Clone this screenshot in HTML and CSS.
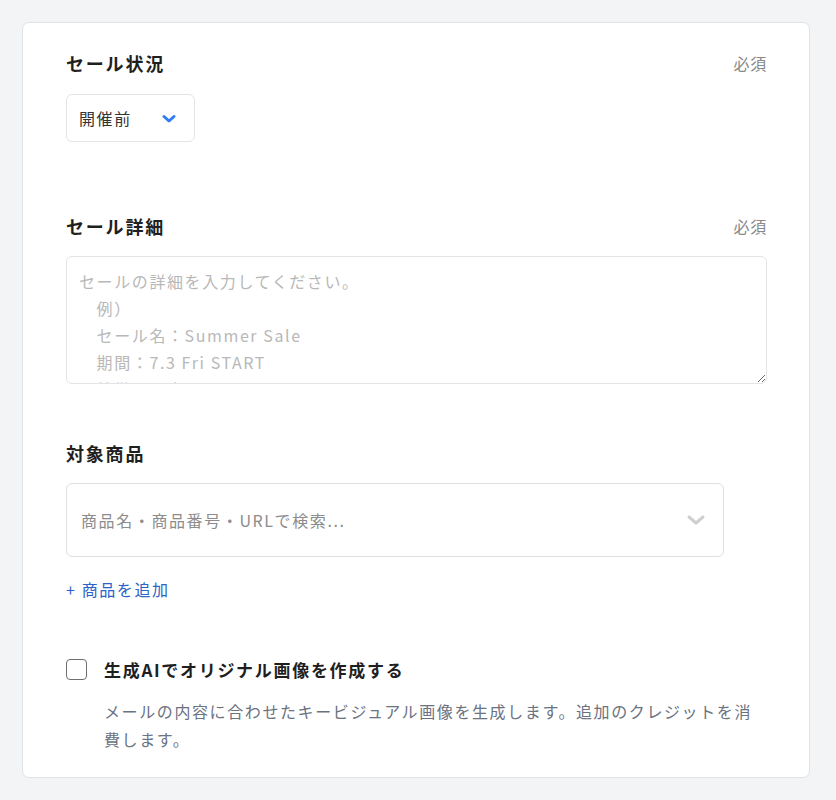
FILE: index.html
```html
<!DOCTYPE html>
<html lang="ja">
<head>
<meta charset="utf-8">
<link rel="stylesheet" href="styles.css">
</head>
<body>
<div class="page">
  <div class="card">
    <section class="field field-status">
      <div class="field-head">
        <span class="label">セール状況</span>
        <span class="required">必須</span>
      </div>
      <div class="select">
        <span class="select-value">開催前</span>
        <svg class="chev-blue" width="14" height="10" viewBox="0 0 14 10"><path d="M2 2.5 L7 7 L12 2.5" fill="none" stroke="#2f7cf6" stroke-width="3" stroke-linecap="round" stroke-linejoin="round"/></svg>
      </div>
    </section>

    <section class="field field-detail">
      <div class="field-head">
        <span class="label">セール詳細</span>
        <span class="required">必須</span>
      </div>
      <textarea class="textarea" placeholder="セールの詳細を入力してください。&#10;　例）&#10;　セール名：Summer Sale&#10;　期間：7.3 Fri START&#10;　特徴：最大50%OFF"></textarea>
    </section>

    <section class="field field-products">
      <div class="field-head">
        <span class="label">対象商品</span>
      </div>
      <div class="search">
        <span class="search-ph">商品名・商品番号・URLで検索...</span>
        <svg class="chev-gray" width="20" height="12" viewBox="0 0 20 12"><path d="M3 3 L10 9 L17 3" fill="none" stroke="#cfcfcf" stroke-width="3" stroke-linecap="round" stroke-linejoin="round"/></svg>
      </div>
      <a class="add-link">+ 商品を追加</a>
    </section>

    <section class="field field-ai">
      <label class="check-row">
        <span class="checkbox"></span>
        <span class="check-label">生成AIでオリジナル画像を作成する</span>
      </label>
      <p class="desc">メールの内容に合わせたキービジュアル画像を生成します。追加のクレジットを消費します。</p>
    </section>
  </div>
</div>
</body>
</html>
```

FILE: styles.css
```css
* { box-sizing: border-box; }
html, body { margin: 0; padding: 0; }
body {
  background: #f3f4f6;
  font-family: "Noto Sans CJK JP", "Noto Sans", sans-serif;
  color: #1f2328;
}
.page {
  padding: 22px 26px 21px 22px;
}
.card {
  background: #ffffff;
  border: 1px solid #dfe2e6;
  border-radius: 7px;
  padding: 27px 42px 24px 43px;
}
.field-head {
  display: flex;
  justify-content: space-between;
  align-items: center;
  height: 26px;
}
.label {
  font-size: 18px;
  font-weight: 700;
  letter-spacing: 0.1em;
  color: #1f1f1f;
  line-height: 26px;
}
.required {
  font-size: 16px;
  color: #8a8a8a;
  letter-spacing: 0.05em;
  line-height: 26px;
}
.select {
  margin-top: 18px;
  width: 129px;
  height: 48px;
  border: 1px solid #e2e4e8;
  border-radius: 6px;
  display: flex;
  align-items: center;
  justify-content: space-between;
  padding: 0 18px 0 12px;
}
.select-value {
  font-size: 16px;
  letter-spacing: 0.1em;
  color: #333;
}
.chev-blue { display: block; margin-top: 1px; }

.field-detail { margin-top: 71px; }
.textarea {
  display: block;
  margin-top: 17px;
  width: 100%;
  height: 128px;
  border: 1px solid #e2e4e8;
  border-radius: 6px;
  padding: 11px 12px;
  font-family: "Noto Sans CJK JP", "Noto Sans", sans-serif;
  font-size: 16px;
  line-height: 27px;
  letter-spacing: 0.1em;
  color: #333;
  resize: vertical;
  outline: none;
  overflow: hidden;
}
.textarea::placeholder { color: #b8b8b8; }

.field-products { margin-top: 56px; }
.search {
  margin-top: 17px;
  width: 658px;
  height: 74px;
  border: 1px solid #dcdfe3;
  border-radius: 6px;
  display: flex;
  align-items: center;
  justify-content: space-between;
  padding: 0 17px 0 14px;
}
.search-ph {
  font-size: 16px;
  letter-spacing: 0.1em;
  color: #8c8c8c;
}
.chev-gray { display: block; }
.add-link {
  display: block;
  margin-top: 20px;
  font-size: 16px;
  line-height: 24px;
  letter-spacing: 0.1em;
  color: #2b63c6;
  cursor: pointer;
}

.field-ai { margin-top: 55px; }
.check-row {
  display: flex;
  align-items: center;
  gap: 17px;
  height: 26px;
}
.checkbox {
  width: 21px;
  height: 21px;
  border: 1.5px solid #6f6f6f;
  border-radius: 4px;
  flex: none;
}
.check-label {
  font-size: 17px;
  font-weight: 700;
  letter-spacing: 0.1em;
  color: #1f1f1f;
}
.desc {
  margin: 15px 0 0 38px;
  font-size: 16px;
  line-height: 28px;
  letter-spacing: 0.1em;
  color: #6b7280;
}
```
